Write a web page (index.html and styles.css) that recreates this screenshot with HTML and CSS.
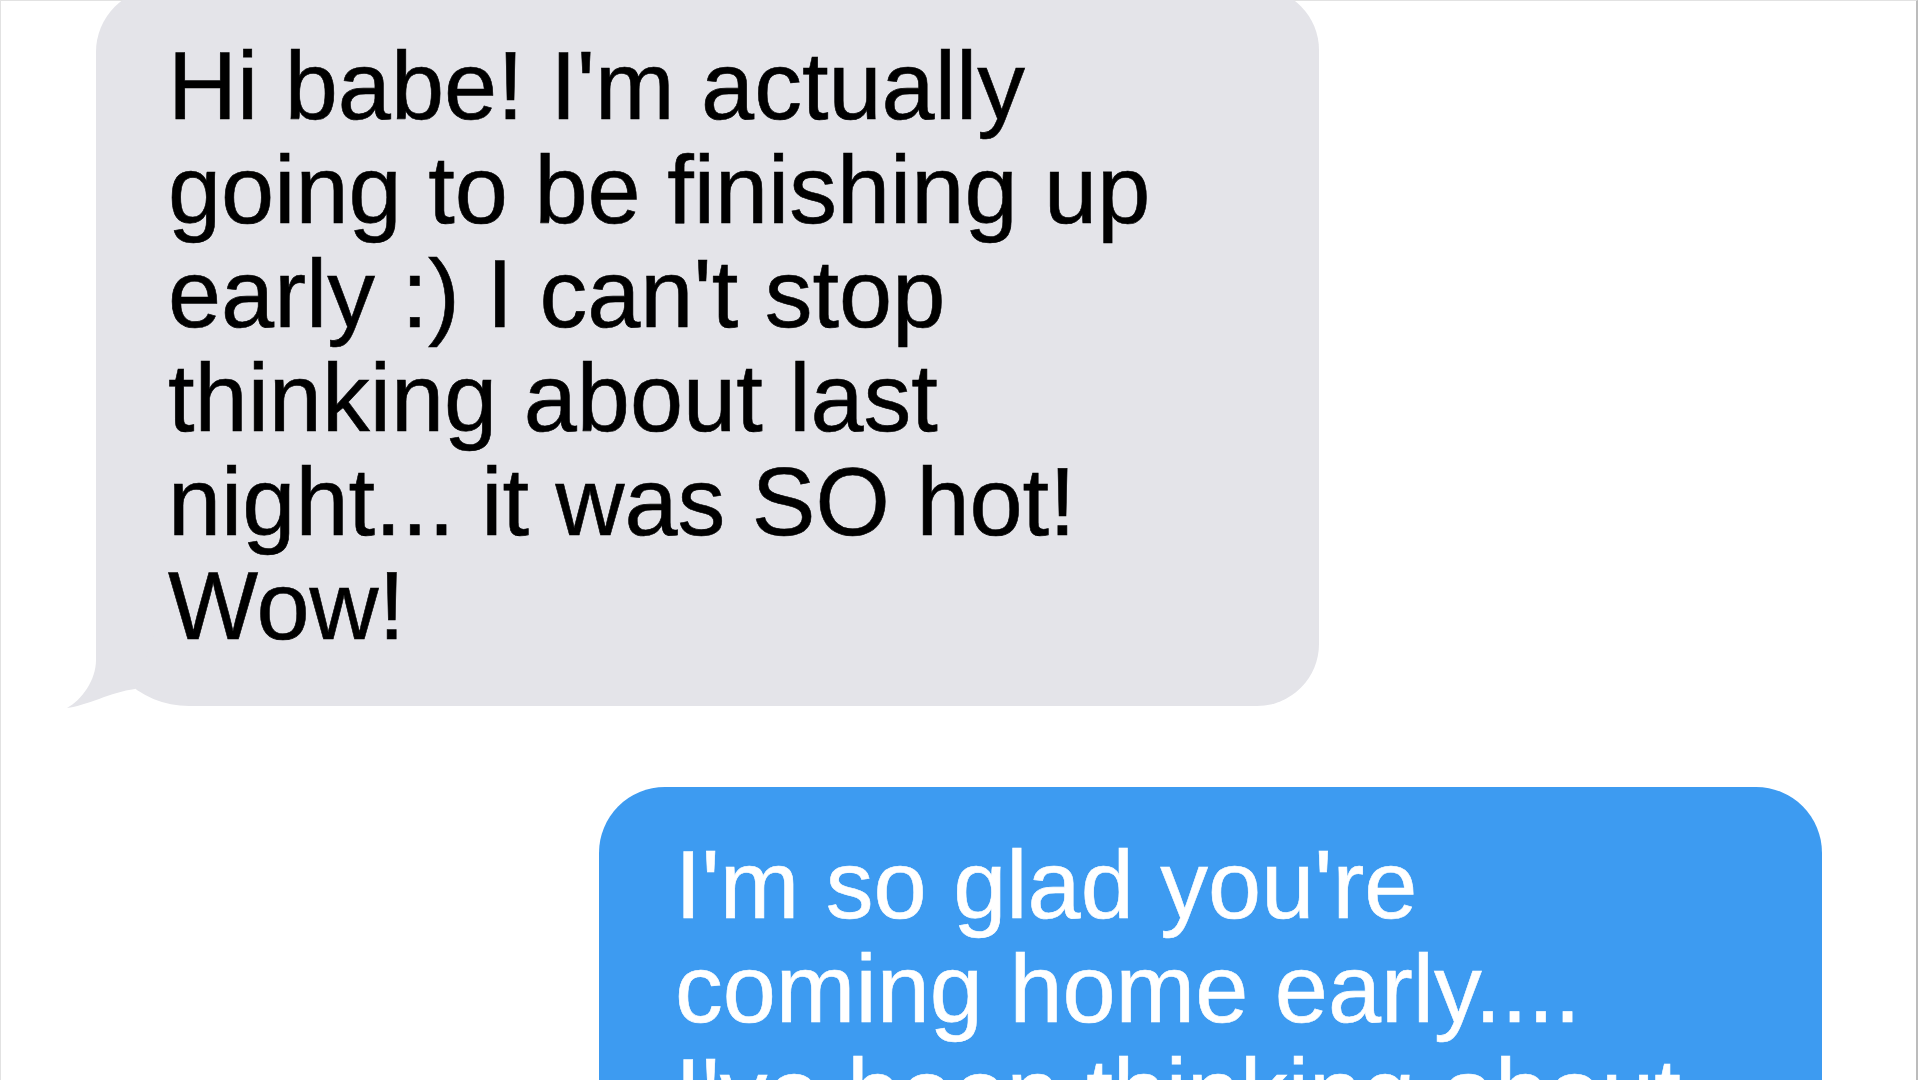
FILE: index.html
```html
<!DOCTYPE html>
<html lang="en">
<head>
  <meta charset="UTF-8">
  <meta name="viewport" content="width=device-width, initial-scale=1.0">
  <title>Messages</title>
  <link rel="stylesheet" href="styles.css">
</head>
<body>
  <div class="thread">
    <div class="bubble received">
      <p>Hi babe! I'm actually going to be finishing up early :) I can't stop thinking about last night... it was SO hot! Wow!</p>
      <svg class="tail" width="100" height="108" viewBox="0 0 100 108">
        <path d="M30 0 L30 60 C30 80 16 100 1 108 C20 106 45 92 69 89 L100 0 Z" fill="#e4e4e9"/>
      </svg>
    </div>
    <div class="bubble sent">
      <p>I'm so glad you're coming home early.... I've been thinking about</p>
    </div>
  </div>
</body>
</html>
```

FILE: styles.css
```css
* {
  margin: 0;
  padding: 0;
  box-sizing: border-box;
}

html, body {
  width: 1920px;
  height: 1080px;
  overflow: hidden;
  background: #fff;
}

.thread {
  display: flex;
  flex-direction: column;
  width: 1918px;
  height: 1080px;
  border-left: 1px solid #e2e2e2;
  border-top: 1px solid #e2e2e2;
  border-right: 2px solid #bcbcbc;
  font-family: "Liberation Sans", Arial, Helvetica, sans-serif;
  font-size: 95.5px;
  line-height: 104px;
}

.bubble {
  position: relative;
  width: 1223px;
  padding: 46px 116px 48px 72px;
  border-radius: 66px;
  -webkit-text-stroke: 0.6px currentColor;
}

.bubble.received {
  margin-top: -13px;
  margin-left: 95px;
  background: #e4e4e9;
  color: #000;
  border-radius: 64px 62px 62px 93px;
}

.bubble.sent {
  align-self: flex-end;
  margin-top: 81px;
  margin-right: 94px;
  padding-left: 76px;
  padding-right: 112px;
  background: #3d9bf1;
  color: #fff;
}

.tail {
  position: absolute;
  left: -30px;
  bottom: -2px;
}
```
